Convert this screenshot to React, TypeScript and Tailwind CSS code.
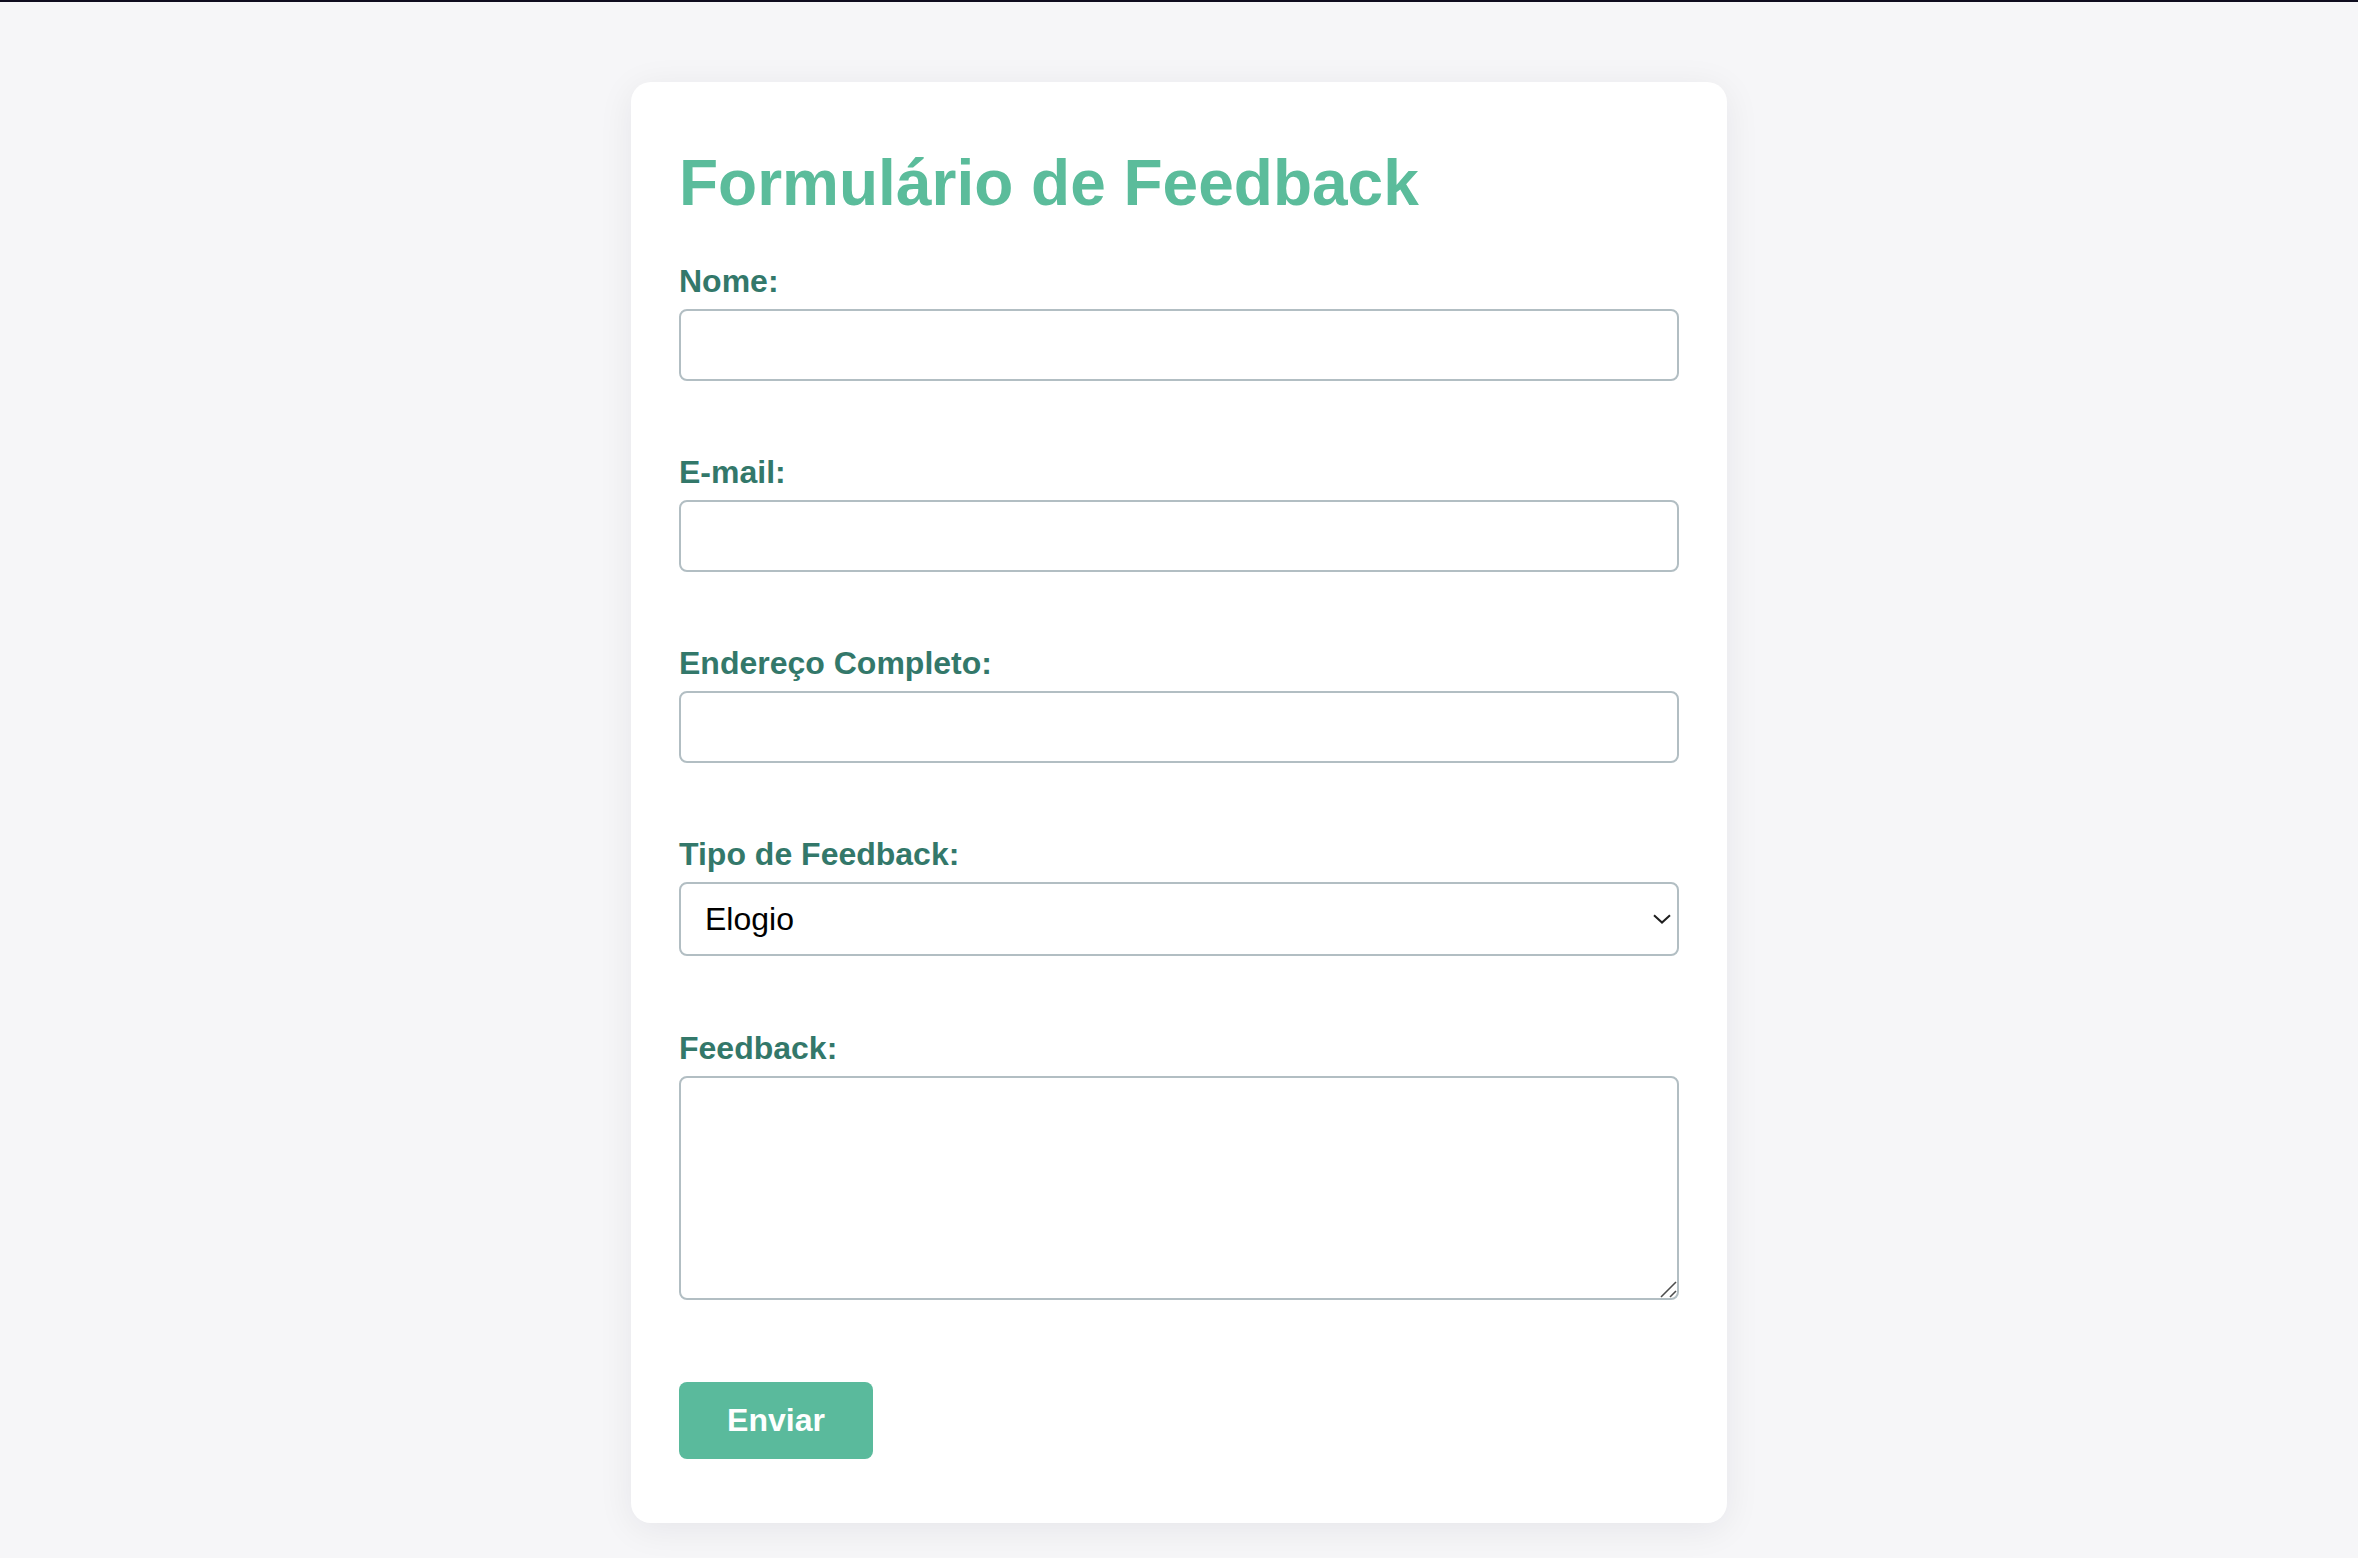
import React from "react";

const font = { fontFamily: '"Liberation Sans", Arial, Helvetica, sans-serif' };

function Label({ children, htmlFor }: { children: React.ReactNode; htmlFor: string }) {
  return (
    <label
      htmlFor={htmlFor}
      className="block text-[32px] leading-[37px] font-bold text-[#33786a] pt-[1px] mb-[9px]"
    >
      {children}
    </label>
  );
}

export default function App() {
  return (
    <div className="min-h-[1558px] w-full bg-[#f6f6f8]" style={font}>
      <div className="h-[2px] w-full bg-[#0f0d1f]" />
      <div className="pt-[80px] pb-[35px]">
        <div className="mx-auto w-[1096px] rounded-[20px] bg-white px-[48px] pt-[64px] pb-[64px] shadow-[0_6px_36px_rgba(20,20,40,0.07)]">
          <h1 className="text-[64px] leading-[74px] font-bold text-[#5bbc9b] mb-[42px]">
            Formulário de Feedback
          </h1>
          <form onSubmit={(e) => e.preventDefault()}>
            <Label htmlFor="nome">Nome:</Label>
            <input
              id="nome"
              type="text"
              className="block w-full h-[72px] border-2 border-[#b2bec3] rounded-[8px] px-[22px] text-[32px] text-black bg-white mb-[72px] outline-none"
            />
            <Label htmlFor="email">E-mail:</Label>
            <input
              id="email"
              type="email"
              className="block w-full h-[72px] border-2 border-[#b2bec3] rounded-[8px] px-[22px] text-[32px] text-black bg-white mb-[72px] outline-none"
            />
            <Label htmlFor="endereco">Endereço Completo:</Label>
            <input
              id="endereco"
              type="text"
              className="block w-full h-[72px] border-2 border-[#b2bec3] rounded-[8px] px-[22px] text-[32px] text-black bg-white mb-[72px] outline-none"
            />
            <Label htmlFor="tipo">Tipo de Feedback:</Label>
            <div className="relative mb-[73px]">
              <select
                id="tipo"
                defaultValue="elogio"
                className="block w-full h-[74px] appearance-none border-2 border-[#b2bec3] rounded-[8px] pl-[24px] pr-[40px] text-[32px] leading-[37px] text-black bg-white outline-none"
              >
                <option value="elogio">Elogio</option>
                <option value="sugestao">Sugestão</option>
                <option value="reclamacao">Reclamação</option>
              </select>
              <svg
                className="pointer-events-none absolute right-[8px] top-1/2 -translate-y-1/2"
                width="18"
                height="10"
                viewBox="0 0 18 10"
                fill="none"
              >
                <path d="M1 1.2 L9 8.6 L17 1.2" stroke="#1f1f1f" strokeWidth="2" />
              </svg>
            </div>
            <Label htmlFor="feedback">Feedback:</Label>
            <div className="relative mb-[82px]">
              <textarea
                id="feedback"
                className="block w-full h-[224px] resize-none border-2 border-[#b2bec3] rounded-[8px] px-[22px] py-[12px] text-[32px] text-black bg-white outline-none"
              />
              <svg
                className="pointer-events-none absolute right-0 bottom-0"
                width="22"
                height="22"
                viewBox="0 0 22 22"
                fill="none"
              >
                <path d="M4 19 L19 4" stroke="#4d4d4d" strokeWidth="1.6" />
                <path d="M13 19 L19 13" stroke="#4d4d4d" strokeWidth="1.6" />
              </svg>
            </div>
            <button
              type="submit"
              className="block h-[77px] w-[194px] rounded-[8px] bg-[#5aba9c] text-white text-[32px] leading-[37px] font-bold"
            >
              Enviar
            </button>
          </form>
        </div>
      </div>
    </div>
  );
}
